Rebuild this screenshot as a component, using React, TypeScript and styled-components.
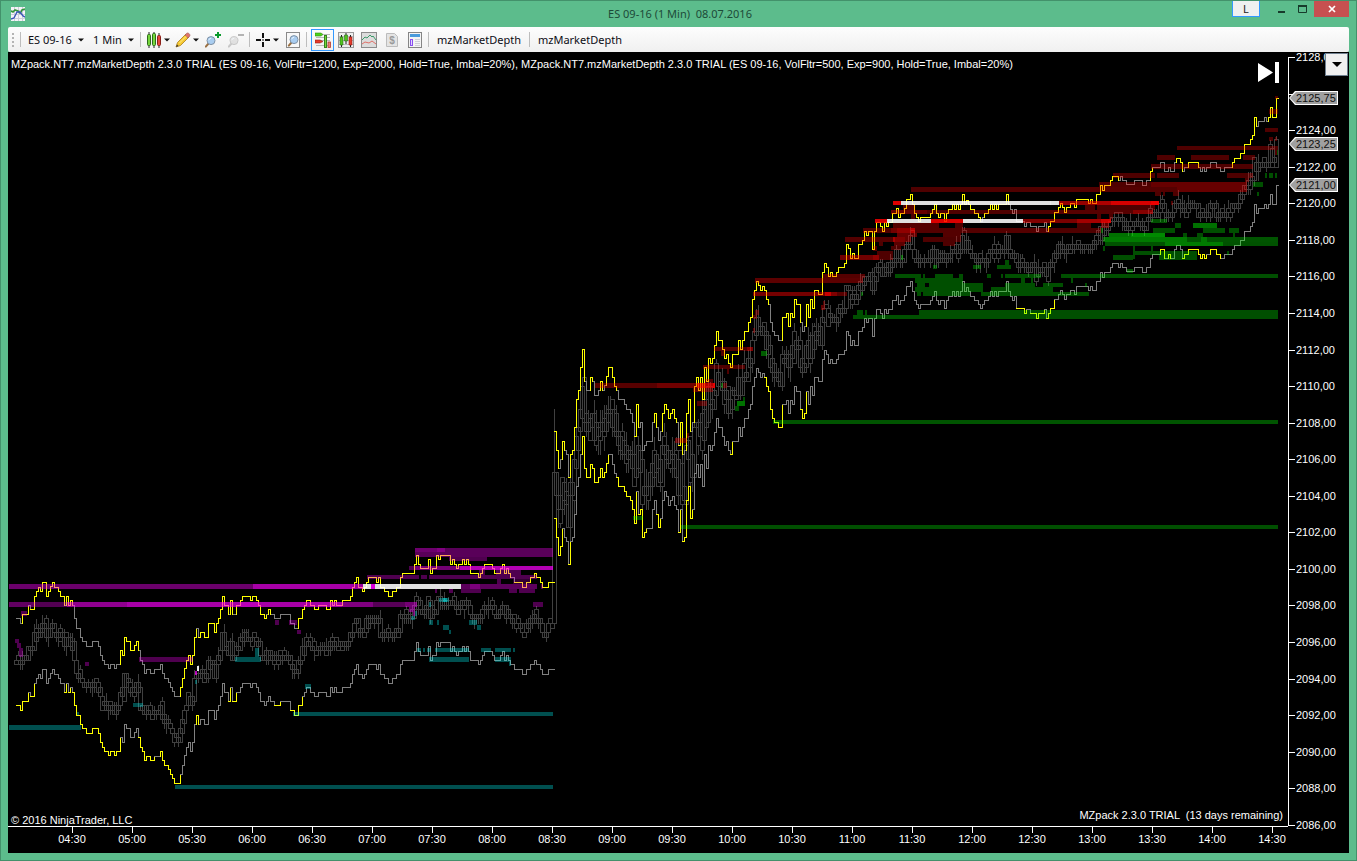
import React from "react";
import styled, { createGlobalStyle, css } from "styled-components";

const Global = createGlobalStyle`
  *, *::before, *::after { box-sizing: border-box; }
  body { margin: 0; background: #5cbc8c; }
  button, select { font: inherit; color: inherit; border: 0; padding: 0; margin: 0; background: transparent; }
  ul, ol, p, h1 { margin: 0; padding: 0; list-style: none; font: inherit; }
`;

/* ---------- price data ---------- */

type Frame = { x: number; y: number };
const F: Record<string, Frame> = {
  A: { x: 0, y: 530 },
  B: { x: 290, y: 530 },
  C: { x: 530, y: 330 },
  D: { x: 680, y: 260 },
  E: { x: 840, y: 170 },
  F: { x: 1050, y: 90 },
};

// The steps of the upper channel line, in thirds of a pixel from each frame's corner.
const upperSteps: [string, string][] = [
  ["A", "50,265 62,280 68,253 86,227 92,238 104,198 110,183 116,172 122,184 127,157 139,199 146,184 152,170 158,157 164,172 176,184 182,198 194,227 200,199 206,227 212,211 217,227 224,265 230,295 242,322 248,334 260,348 278,334 296,348 302,376 308,390 314,403 326,416 332,403 344,416 350,403 362,362 368,376 374,322 380,334 392,362 404,346 410,334 416,362 422,390 428,403 434,430 440,418 452,430 464,418 482,403 488,430 494,445 506,457 512,472 518,484 524,499 542,472 548,445 554,416 560,390 566,376 572,403 578,376 584,322 590,295 596,322 602,308 614,322 626,280 644,308 650,280 656,265 662,238 668,198 674,227 686,253 692,211 698,253 710,227 722,211 728,199 752,211 758,199 770,211 776,227 782,253 794,265 800,253 806,238 812,253 824,265 842,253"],
  ["B", "2,280 14,295 26,265 38,238 44,227 50,211 62,227 74,238 86,227 110,238 122,211 128,227 134,211 140,227 158,211 182,198 188,172 194,157 200,143 206,172 218,184 224,172 230,157 236,143 260,157 266,143 272,172 284,184 296,199 308,184 320,172 332,143 338,130 374,103 380,76 386,103 392,116 416,88 422,130 428,116 440,76 446,88 452,76 482,103 488,88 494,103 500,116 506,103 518,88 524,103 530,88 536,103 542,130 566,143 572,130 578,116 584,103 608,116 614,130 632,116 638,103 644,130 650,116 656,130 662,143 674,157 698,172 710,157 722,143 734,130 740,143 752,157 758,172 776,157 794,157"],
  ["C", "74,303 80,360 86,415 92,387 98,334 104,360 110,372 116,442 122,373 128,360 134,292 140,208 146,181 152,112 158,58 164,154 170,181 182,142 188,154 194,195 206,181 212,154 218,181 224,167 230,139 236,112 248,142 254,169 260,181 266,208 284,222 290,238 302,250 308,277 314,318 320,222 326,292 332,277 338,360 344,346 350,334 368,277 374,250 380,292 386,331 392,304 398,250 404,223 410,238 416,264 422,250 428,238 434,264 440,277 446,345 452,277 458,372 464,360 470,250 476,208 482,304 488,277 494,169 500,142 506,181 512,142 518,208 524,112 530,153 536,85 542,100 548,85 554,46 560,5 566,31 578,58 584,85 590,73 596,100 602,112 608,73 626,31 632,58 638,31"],
  ["D", "194,214 206,187 212,172 218,118 224,91 230,64 236,75 242,91 248,78 254,91 260,118 266,132 272,187 278,214 284,227 296,241 308,172 320,160 326,199 332,160 338,172 344,118 350,132 362,186 368,214 374,199 380,132 386,172 392,118 398,145 404,91 416,103 428,37 434,10 440,22 446,48 452,37 458,48 470,37 476,22"],
  ["E", "14,280 20,223 26,236 32,264 38,250 44,264 56,223 68,211 74,184 80,196 86,184 98,238 104,184 110,157 122,170 128,184 134,157 140,170 146,157 158,130 170,116 176,142 182,130 194,116 200,88 212,73 218,103 224,130 230,142 236,154 242,142 272,130 278,118 284,102 290,130 296,142 302,130 314,154 320,130 326,118 338,102 344,118 350,102 356,118 362,103 368,73 374,103 380,90 386,103 392,118 404,130 416,142 422,154 428,142 434,130 446,118 452,103 458,118 464,103 470,118 476,103 500,73 506,103 512,118 518,130 524,118 530,154 554,170 560,157 572,170 590,184 596,170 614,157 620,184 626,170"],
  ["F", "2,394 14,366 26,352 32,340 38,352 44,366 50,352 62,340 74,352 80,328 116,340 122,328 128,340 140,313 152,286 158,300 164,286 182,272 188,259 206,271 212,259 218,271 230,283 254,271 278,286 290,271 302,244 308,232 332,218 344,244 356,232 362,244 374,218 380,205 392,218 398,244 404,232 416,218 446,232 452,244 458,232 464,244 470,232 482,218 500,232 512,244 524,232 548,218 554,205 572,190 584,163 602,148 608,136 614,82 620,108 626,94 644,82 650,94 656,82 662,52 668,82 680,25 686,25"],
];

// Spans where a channel line is highlighted.
const upperHot: [string, string][] = [
  ["A", "68-86 92-194 200-217 362-416 542-590 596-686 692-698 710-800 806-812"],
  ["B", "26-662 674-794"],
  ["C", "74-86 98-104 116-164 182-188 212-218 230-260 314-326 374-380 398-440 446-458 470-482 494-650"],
  ["D", "190-266 308-362 380-500"],
  ["E", "0-422 434-506 626-640"],
  ["F", "0-206 302-308 380-398 416-428 548-620 656-686"],
];
const lowerHot: [string, string][] = [
  ["A", "50-86 92-104 194-200 206-212 217-362 416-464 470-542 590-596 686-692 698-710 820-842 872-900"],
  ["B", "2-26"],
  ["C", "74-98 116-122 158-236 260-320 326-350 380-392 446-452 458-488"],
  ["D", "150-156 172-176 254-308 362-380"],
  ["E", "530-560 572-600 620-630"],
  ["F", "2-14 240-250 332-344 350-362 398-410 416-428 446-470 482-488 500-512"],
];

const px = (v: number, o: number) => Math.round(o + v / 3 - 0.4);

const upper = upperSteps.flatMap(([f, s]) =>
  s.split(" ").map((p) => {
    const [x, y] = p.split(",").map(Number);
    return { x: px(x, F[f].x), y: px(y, F[f].y) };
  })
);

const spans = (list: [string, string][]) =>
  list.flatMap(([f, s]) => s.split(" ").map((r) => r.split("-").map((v) => px(Number(v), F[f].x))));

function linePaths(dy: number, hot: number[][]) {
  let cold = "";
  let warm = "";
  const isHot = (x: number) => hot.some(([a, b]) => x >= a && x < b);
  upper.forEach((p, i) => {
    const n = upper[i + 1];
    // Two points at one x mark the break between the night and day sessions.
    if (!n || n.x === p.x) return;
    const h = isHot(p.x + 0.5);
    const hn = isHot(n.x + 0.5);
    const y = p.y + dy + 0.5;
    const across = `M${p.x} ${y}H${n.x + 1}`;
    const down = `M${n.x + 0.5} ${y}V${n.y + dy + 0.5}`;
    if (h) warm += across;
    else cold += across;
    if (h || (hn && n.y < p.y)) warm += down;
    else cold += down;
  });
  return { cold, warm };
}

const TICK = 4.565;
const row = (y: number) => Math.round((y - 57) / TICK);
const rowY = (k: number) => Math.round(57 + k * TICK) + 0.5;

function bars() {
  let seed = 11;
  const rnd = () => {
    seed = (seed * 16807) % 2147483647;
    return seed / 2147483647;
  };
  let d = "M552.5 623.5V472.5H556.5V623.5M554.5 472V409M552 623.5H557";
  let i = 0;
  let prev = row(upper[0].y + 43);
  for (let x = 16; x <= 1276; x += 2) {
    while (i < upper.length - 1 && upper[i + 1].x <= x) i++;
    const mid = row(upper[i].y + 43);
    if (x > 552 && x < 556) {
      prev = mid;
      continue;
    }
    const wild = x > 555 && x < 720 ? 2 : x >= 720 && x < 830 ? 1 : 0;
    const top = Math.min(mid, prev) - Math.floor(rnd() * (1.4 + wild));
    let bottom = Math.max(mid, prev) + Math.floor(rnd() * (1.4 + wild));
    if (bottom === top) bottom = top + 1;
    d += `M${x - 1.5} ${rowY(top)}H${x + 2.5}V${rowY(bottom)}H${x - 1.5}Z`;
    const up = Math.floor(rnd() * (2.3 + wild));
    const dn = Math.floor(rnd() * (2.2 + wild));
    if (up) d += `M${x + 0.5} ${rowY(top)}V${rowY(top - up)}`;
    if (dn) d += `M${x + 0.5} ${rowY(bottom)}V${rowY(bottom + dn)}`;
    prev = mid;
  }
  return d;
}

// Depth levels: frame, colour, then "x1-x2,y,height,strength in %" in the frame's thirds.
const depth: [string, string, string][] = [
  ["A", "#f0f", "27-759,162,15,42 759-1060,162,15,66 27-104,216,15,38 104-200,216,15,32 200-380,216,15,56 380-1026,216,15,66 722-776,216,15,20 63-81,243,15,31 45-57,328,12,31 51-63,340,14,31 57-69,354,26,31 255-267,396,12,31 417-578,381,15,31 585-591,423,12,70 825-837,270,14,31 867-890,270,14,31 891-903,300,12,31"],
  ["A", "#fff", "590-597,408,15,90"],
  ["A", "#0ff", "27-243,585,15,31 525-1659,765,12,31 399-430,519,12,31 230-238,547,10,31 584-591,450,12,31 705-782,381,15,31 765-777,354,27,31 879-897,546,12,31"],
  ["B", "#0ff", "27-789,546,12,31 45-63,462,15,31 363-375,257,12,31 375-381,243,14,31 417-423,216,14,31 447-477,204,12,31 459-471,204,12,40 417-429,270,15,31 441-447,270,15,31 459-477,285,15,31 477-483,300,12,31 537-561,270,15,31 561-573,285,15,31 381-393,354,12,31 399-405,354,12,31 411-423,354,12,31 435-537,354,12,31 573-602,354,12,31 615-663,354,12,31 669-675,354,12,31 417-537,381,15,31 615-663,381,15,31 657-663,396,12,31"],
  ["B", "#fff", "219-243,162,15,88 255-513,162,15,88"],
  ["B", "#f0f", "190-219,162,15,60 243-255,162,15,85 513-740,162,15,36 540-570,162,15,20 156-250,216,15,50 250-345,216,15,34 345-380,216,15,45 375-789,54,27,35 375-441,54,12,12 441-465,54,12,24 477-591,81,12,31 357-375,108,12,31 375-510,108,12,45 510-789,108,12,70 566-585,121,14,31 617-693,121,14,31 231-387,135,12,31 393-411,135,12,31 417-740,135,12,31 621-633,147,15,31 669-720,147,15,20 753-759,162,14,31 435-441,177,12,31 477-489,177,12,31 513-573,177,12,31 657-681,177,12,31 687-735,177,12,31 729-759,216,15,31 357-375,231,14,40 369-375,245,12,40"],
  ["C", "#f00", "194-380,159,15,34 380-500,159,15,44 500-548,159,15,72 548-555,159,15,90 524-548,147,12,31 490-548,174,12,36 501-530,213,14,31 435-471,324,14,36 471-477,310,14,31 551-650,51,12,31 650-668,51,12,50 573-585,63,14,31 519-645,105,12,31 591-597,117,14,31 579-591,159,14,31"],
  ["C", "#0f0", "310-338,558,12,31 453-2244,585,12,31 573-579,159,14,31 615-627,228,14,31 621-645,213,15,45 639-645,201,12,31"],
  ["D", "#f00", "225-550,54,15,36 428-554,42,12,33 220-434,96,12,46 434-452,96,12,78 452-470,96,12,50 470-500,96,12,34 224-236,150,15,31 220-230,165,12,31 219-226,204,14,31 422-434,135,14,36 428-434,123,12,31"],
  ["D", "#0f0", "243-261,273,15,36 279-1794,480,12,33"],
  ["E", "#fff", "183-657,93,12,88 141-273,147,12,88 369-549,147,12,88"],
  ["E", "#f00", "213-630,51,15,31 159-183,93,12,86 153-260,120,12,40 260-630,120,12,31 105-141,147,12,82 273-369,147,12,85 549-630,147,12,50 189-225,106,14,31 213-225,132,15,31 159-297,159,15,33 345-369,159,15,31 69-153,174,15,31 153-171,174,15,45 171-213,174,15,56 213-225,174,15,72 225-630,174,15,33 171-231,189,12,40 309-363,189,12,33 15-165,201,15,33 159-195,201,15,50 195-212,201,15,40 249-363,201,15,31 117-129,216,12,31 162-195,216,12,36 309-345,216,12,31 99-111,228,14,31 153-183,228,12,31 110-159,243,12,31 0-99,255,15,44 99-117,255,15,56 117-159,255,15,31"],
  ["E", "#0f0", "183-189,255,15,36 279-291,285,12,31 399-423,285,12,31 471-513,285,12,31 495-507,270,15,31 165-243,312,12,31 249-255,312,12,31 285-338,312,12,31 357-369,312,12,31 441-453,312,12,31 483-489,312,12,31 495-603,312,12,31 225-369,324,15,31 543-555,324,15,31 573-579,324,15,31 231-255,339,12,31 267-429,339,12,31 495-585,339,12,31 609-630,339,12,31 225-429,351,15,31 453-630,351,15,31 231-243,366,12,31 249-390,366,12,31 422-630,366,12,31 51-69,420,15,31 75-81,420,15,31 237-630,420,27,31 39-237,435,12,31 63-69,366,12,31"],
  ["F", "#fff", "0-3,333,12,30"],
  ["F", "#f00", "381-683,168,12,31 675-684,18,10,31 657-684,57,15,31 645-684,114,12,31 657-669,141,12,31 675-681,141,12,31 675-681,181,14,31 321-375,195,15,31 423-537,195,15,31 579-615,195,15,31 303-608,222,15,31 189-315,249,15,31 321-387,249,15,31 531-608,249,15,31 147-303,276,15,31 303-590,276,15,40 584-596,264,12,31 0-381,291,15,33 381-590,291,15,40 315-333,306,12,31 339-345,306,12,31 369-387,306,12,31 27-141,333,12,58 141-183,333,12,68 183-303,333,12,84 303-327,333,12,94 363-369,333,12,31 105-135,345,15,31 141-315,345,15,31 0-250,360,12,34 250-309,360,12,52 0-80,387,12,48 80-153,387,12,64 153-183,387,12,82 141-153,372,15,31 177-189,372,15,31 153-177,399,15,36 81-123,399,15,31 0-153,414,15,31"],
  ["F", "#0f0", "645-651,249,14,31 657-669,249,14,31 675-681,249,14,31 609-639,276,14,31 621-627,306,12,31 681-684,181,14,31 303-351,387,12,31 375-393,399,15,31 429-501,399,15,44 309-375,414,15,31 459-525,414,15,31 537-567,414,15,31 153-159,414,15,31 177-243,429,12,44 243-345,429,12,54 399-411,429,12,31 441-459,429,12,31 549-555,429,12,31 159-684,441,15,33 165-411,441,15,22 453-471,441,15,22 165-684,456,12,32 345-519,456,12,24 159-165,468,15,31 249-255,468,39,31 303-309,468,15,31 255-327,483,12,31 189-249,495,15,31 327-440,483,27,31 531-537,483,12,31 231-249,537,12,31 33-684,552,12,31 63-69,564,15,31 0-39,579,12,31 0-9,591,15,31 105-111,579,12,31 0-117,606,12,31 0-684,660,27,31"],
];

const levels = depth.flatMap(([f, fill, s]) =>
  s.split(" ").map((r) => {
    const [xs, y, h, a] = r.split(",");
    const [x1, x2] = xs.split("-").map((v) => Math.round(F[f].x + Number(v) / 3));
    const top = Math.round(F[f].y + Number(y) / 3);
    return { fill, x: x1, w: x2 - x1, y: top, h: Math.round(Number(h) / 3), a: Number(a) / 100 };
  })
);

const upperPath = linePaths(0, spans(upperHot));
const lowerPath = linePaths(87, spans(lowerHot));
const barPath = bars();

// 2126 keeps its tick but has no label: the last price mark stands there.
const prices = Array.from({ length: 22 }, (_, i) => ({
  value: 2128 - i * 2,
  text: i === 1 ? "" : `${2128 - i * 2},00`,
}));
const times = Array.from({ length: 21 }, (_, i) => {
  const m = 270 + i * 30;
  return `${String(Math.floor(m / 60)).padStart(2, "0")}:${m % 60 ? "30" : "00"}`;
});
const marks = [
  { text: "2125,75", top: 39 },
  { text: "2123,25", top: 85 },
  { text: "2121,00", top: 126 },
];

/* ---------- window ---------- */

const Window = styled.div`
  min-height: 100vh;
  display: flex;
  flex-direction: column;
  padding: 0 7px 7px;
  background: #5cbc8c;
  border: 1px solid #43916b;
  font-family: "Noto Sans", "Open Sans", sans-serif;
  font-size: 11px;
`;
const TitleBar = styled.header`
  height: 26px;
  flex: none;
  display: grid;
  grid-template-columns: 1fr auto 1fr;
  align-items: center;
  padding-left: 3px;
  color: #1c4a38;
`;
const Title = styled.h1`
  line-height: 16px;
  white-space: pre;
`;
const Controls = styled.div`
  display: flex;
  align-self: start;
  justify-content: flex-end;
`;
const CaptionButton = styled.button<{ $kind?: "link" | "close" }>`
  height: 16px;
  width: 22px;
  display: flex;
  align-items: center;
  justify-content: center;
  color: #173a2b;
  ${(p) => p.$kind === "link" && css`
    width: 28px;
    margin-right: 10px;
    background: #f0f0f0;
    border: 1px solid #3399ff;
    border-top: 0;
    color: #222;
  `}
  ${(p) => p.$kind === "close" && css`
    width: 35px;
    background: #c75050;
    color: #fff;
  `}
`;
const Toolbar = styled.div`
  height: 25px;
  flex: none;
  display: flex;
  align-items: center;
  background: linear-gradient(#fdfdfd, #f0f0f0);
  border-radius: 2px;
  color: #0c0c14;
`;
const Grip = styled.span`
  width: 10px;
  height: 15px;
  background: radial-gradient(circle, #b4b4b4 1px, transparent 1px) 3px 0 / 4px 4px repeat-y;
`;
const Sep = styled.span`
  width: 5px;
  height: 15px;
  border-left: 2px solid transparent;
  background: linear-gradient(#bdbdbd, #bdbdbd) 0 0 / 1px 100% no-repeat;
`;
const Picker = styled.label<{ $w: number }>`
  width: ${(p) => p.$w}px;
  display: flex;
  align-items: center;
  padding-right: 4px;
  svg { flex: none; }
`;
const Select = styled.select`
  appearance: none;
  flex: 1;
  min-width: 0;
  padding-left: 5px;
  line-height: 18px;
  outline: none;
`;
const Tool = styled.button<{ $menu?: boolean; $on?: boolean }>`
  width: ${(p) => (p.$menu ? 29 : 23)}px;
  height: 22px;
  display: flex;
  align-items: center;
  justify-content: center;
  gap: 2px;
  ${(p) => p.$on && css`border: 1px solid #3399ff;`}
  svg { flex: none; }
`;
const TopTools = styled.div`
  display: flex;
  align-items: center;
  padding-left: 2px;
`;
const TextTool = styled.button`
  padding: 0 6px;
  line-height: 18px;
`;

/* ---------- chart ---------- */

const Chart = styled.main`
  flex: 1;
  display: grid;
  grid-template-columns: 1fr 61px;
  grid-template-rows: 1fr 26px;
  background: #000;
  color: #fff;
  font-family: "Liberation Sans", Arial, sans-serif;
  font-size: 11px;
  line-height: 13px;
  min-height: 600px;
`;
const Plot = styled.section`
  position: relative;
  display: flex;
  flex-direction: column;
  justify-content: space-between;
  min-width: 0;
  border-bottom: 1px solid #fff;
  padding: 6px 5px 0 3px;
`;
const Canvas = styled.svg`
  position: absolute;
  inset: 0;
  width: 100%;
  height: 100%;
`;
const Caption = styled.p`
  position: relative;
  white-space: pre;
`;
const Footer = styled.footer`
  position: relative;
  display: flex;
  justify-content: space-between;
  line-height: 12px;
`;
const Trial = styled.p`
  padding-bottom: 5px;
  white-space: pre;
`;
const Copyright = styled.p`
  align-self: flex-end;
`;
const JumpButton = styled.button`
  position: absolute;
  right: 8px;
  top: 10px;
  width: 22px;
  height: 21px;
`;
const PriceAxis = styled.aside`
  position: relative;
  padding: 5px 0 1px;
`;
const PriceList = styled.ol`
  height: 100%;
  display: flex;
  flex-direction: column;
  justify-content: space-between;
  border-left: 1px solid #fff;
`;
const Price = styled.li`
  height: 1px;
  display: flex;
  align-items: center;
  &::before { content: ""; width: 6px; height: 1px; margin-right: 1px; background: #fff; }
`;
const Mark = styled.output<{ $top: number }>`
  position: absolute;
  left: 1px;
  top: ${(p) => p.$top}px;
  width: 49px;
  height: 14px;
  padding-left: 7px;
  line-height: 14px;
  background: #fff;
  color: #111;
  clip-path: polygon(0 50%, 6px 0, 100% 0, 100% 100%, 6px 100%);
  z-index: 0;
  &::before {
    content: "";
    position: absolute;
    inset: 1px;
    background: #a0a0a0;
    clip-path: polygon(0 50%, 6px 0, 100% 0, 100% 100%, 6px 100%);
    z-index: -1;
  }
`;
const ScaleButton = styled.button`
  position: absolute;
  right: 1px;
  top: 1px;
  width: 23px;
  height: 23px;
  display: flex;
  align-items: center;
  justify-content: center;
  background: #f0f0f0;
  border: 1px solid #708090;
`;
const TimeAxis = styled.ol`
  grid-column: 1 / 3;
  display: flex;
  padding: 0 47px 0 34px;
`;
const Time = styled.li`
  flex: 1;
  min-width: 0;
  display: flex;
  flex-direction: column;
  align-items: center;
  &::before { content: ""; width: 1px; height: 6px; background: #fff; }
`;

const Caret = () => (
  <svg width="6" height="4" viewBox="0 0 6 4" aria-hidden="true"><path d="M0 .5h6L3 3.5z" fill="#111" /></svg>
);

const Lens = ({ x, y, faded }: { x: number; y: number; faded?: boolean }) => (
  <g transform={`translate(${x} ${y})`} opacity={faded ? 0.35 : 1}>
    <path d="M3.5 7.5L.8 10.6" stroke={faded ? "#777" : "#9a7042"} strokeWidth="2" strokeLinecap="round" />
    <circle cx="6" cy="4.6" r="4" fill={faded ? "#bbb" : "#a9cdf0"} stroke={faded ? "#777" : "#7f92a6"} />
    <path d="M3.8 4.2a2.4 2.4 0 0 1 2.4-2" stroke="#e8f4ff" fill="none" />
  </g>
);

const Icon = ({ children }: { children: React.ReactNode }) => (
  <svg width="16" height="16" viewBox="0 0 16 16" aria-hidden="true">{children}</svg>
);

export default function App() {
  return (
    <Window>
      <Global />
      <TitleBar>
        <svg width="14" height="14" viewBox="0 0 14 14" aria-hidden="true">
          <path d="M0 0h14v14H0z" fill="#f4f4f8" />
          <path d="M0 3.5h14M0 7.5h14M0 11.5h14M3.5 0v14M7.5 0v14M11.5 0v14" stroke="#cdcdda" />
          <path d="M0 4l2 1 2-2 3 1 2 2 1-1 1-2 3-1" stroke="#35963a" strokeWidth="1.6" fill="none" />
          <path d="M0 12l3-1 2-4 1-2 3 0 3 4 2 1" stroke="#3a55b8" strokeWidth="1.4" fill="none" />
        </svg>
        <Title>ES 09-16 (1 Min)  08.07.2016</Title>
        <Controls>
          <CaptionButton $kind="link">L</CaptionButton>
          <CaptionButton aria-label="Minimize">
            <svg width="10" height="9" viewBox="0 0 10 9"><path d="M2 7h7" stroke="currentColor" strokeWidth="2" /></svg>
          </CaptionButton>
          <CaptionButton aria-label="Maximize">
            <svg width="10" height="8" viewBox="0 0 10 8"><path d="M.5 1v6.5h8V1" fill="none" stroke="currentColor" /><path d="M0 1h9" stroke="currentColor" strokeWidth="2" /></svg>
          </CaptionButton>
          <CaptionButton $kind="close" aria-label="Close">
            <svg width="8" height="8" viewBox="0 0 8 8"><path d="M1 1l6 6M7 1L1 7" stroke="currentColor" strokeWidth="1.7" /></svg>
          </CaptionButton>
        </Controls>
      </TitleBar>

      <Toolbar role="toolbar">
        <Grip />
        <Sep />
        <Picker $w={65}>
          <Select aria-label="Instrument"><option>ES 09-16</option></Select>
          <Caret />
        </Picker>
        <Picker $w={50}>
          <Select aria-label="Interval"><option>1 Min</option></Select>
          <Caret />
        </Picker>
        <Sep />
        <Tool $menu aria-label="Chart style">
          <Icon>
            <path d="M3 0v16M8 0v16M13 1v15" stroke="#222" />
            <rect x="1.5" y="2.5" width="3" height="11" rx="1" fill="#76d63c" stroke="#2e6d1c" />
            <rect x="6.5" y="1.5" width="3" height="12" rx="1" fill="#76d63c" stroke="#2e6d1c" />
            <rect x="11.5" y="3.5" width="3" height="10" rx="1" fill="#e6463c" stroke="#8a2019" />
          </Icon>
          <Caret />
        </Tool>
        <Tool $menu aria-label="Drawing tools">
          <Icon>
            <path d="M1 15l1.5-4.5L11 2l3 3-8.500 8.500z" fill="#f6c931" stroke="#a87a1c" strokeWidth=".8" />
            <path d="M10 3l1.800-1.800q1-.7 2 .2l.8.8q.8 1 0 2L13 6z" fill="#e0736c" stroke="#9c5a50" strokeWidth=".6" />
            <path d="M1 15l1-2.500 1.500 1.500z" fill="#333" />
            <path d="M4.500 11L11 4.500" stroke="#ffeb8c" />
          </Icon>
          <Caret />
        </Tool>
        <Tool aria-label="Zoom in">
          <Icon><Lens x={0} y={4} /><path d="M13 0v6M10 3h6" stroke="#0a9a2c" strokeWidth="2" /></Icon>
        </Tool>
        <Tool aria-label="Zoom out">
          <Icon><Lens x={0} y={4} faded /><path d="M10 3h6" stroke="#b4b4b4" strokeWidth="2" /></Icon>
        </Tool>
        <Sep />
        <Tool $menu aria-label="Crosshair">
          <Icon><path d="M8 1v5M8 10v5M1 8h5M10 8h5M7.500 8h1" stroke="#111" strokeWidth="2" /></Icon>
          <Caret />
        </Tool>
        <Tool aria-label="Data box">
          <Icon>
            <rect x="1.500" y=".5" width="13" height="15" fill="#f8f8f8" stroke="#8a8a8a" />
            <Lens x={3} y={3} />
          </Icon>
        </Tool>
        <Sep />
        <TopTools>
          <Tool $on aria-label="Chart trader">
            <Icon>
              <path d="M1 5.500h14M1 8.500h14M1 13.500h14M8 2.500h7" stroke="#b8b8b8" />
              <path d="M0 1h6l2 1.500L6 4H0z" fill="#4fd11c" stroke="#2b8d14" strokeWidth=".6" />
              <path d="M0 8h5l3 1.500L5 11H0z" fill="#e63a2c" stroke="#952018" strokeWidth=".6" />
              <rect x="9.500" y="3.500" width="2" height="12" fill="#76d63c" stroke="#34841c" />
              <rect x="13" y="10" width="2.500" height="5.500" fill="#e88078" stroke="#b23a30" strokeWidth=".8" />
            </Icon>
          </Tool>
          <Tool aria-label="Indicators">
            <Icon>
              <rect x=".5" y=".5" width="15" height="15" fill="#eee" stroke="#999" />
              <path d="M1 4.500h14M1 8.500h14M1 12.500h14" stroke="#bbb" />
              <path d="M3.500 3v12M8 1v11M12.500 3v12" stroke="#222" />
              <path d="M2 5h3v8H2zM6.500 3h3v6h-3z" fill="#52c41e" stroke="#2e6d1c" strokeWidth=".6" />
              <path d="M11 5h3v8h-3z" fill="#e63a2c" stroke="#8a2019" strokeWidth=".6" />
            </Icon>
          </Tool>
          <Tool aria-label="Strategies">
            <Icon>
              <rect x=".5" y=".5" width="15" height="15" fill="#dcdcdc" stroke="#8c8c8c" />
              <path d="M1 8l3-3 2 1 3-3 2 2 1-1 3 4" stroke="#3c9a6a" fill="none" />
              <path d="M1 12l3-2 4 1 3-2 4 3" stroke="#e07068" fill="none" />
            </Icon>
          </Tool>
          <Tool aria-label="Account" disabled>
            <Icon>
              <path d="M2.500 1.500h8l3 3v10h-11z" fill="#e4e4e4" stroke="#bcbcbc" />
              <text x="8" y="12" textAnchor="middle" fontSize="10" fontWeight="700" fontFamily="Liberation Sans" fill="#999">$</text>
            </Icon>
          </Tool>
          <Tool aria-label="Properties">
            <Icon>
              <rect x="1.500" y=".5" width="13" height="15" fill="#f4f4f4" stroke="#858585" />
              <path d="M3 2h10v3H3z" fill="#4a9bdc" />
              <rect x="3.500" y="7.500" width="2" height="6" fill="#e0d4ff" stroke="#8a50f0" />
              <path d="M8 7.500h5M8 9.500h5M8 11.500h5M8 13.500h5" stroke="#cfcfd8" />
            </Icon>
          </Tool>
        </TopTools>
        <Sep />
        <TextTool>mzMarketDepth</TextTool>
        <Sep />
        <TextTool>mzMarketDepth</TextTool>
      </Toolbar>

      <Chart>
        <Plot>
          <Canvas viewBox="8 52 1280 774" preserveAspectRatio="none" role="img" aria-label="ES 09-16 one minute chart with market depth">
            <g shapeRendering="crispEdges" fill="none" strokeWidth="1">
              <path d={barPath} stroke="#404040" />
              <path d={upperPath.cold} stroke="#808080" />
              <path d={lowerPath.cold} stroke="#808080" />
              <path d={upperPath.warm} stroke="#ff0" />
              <path d={lowerPath.warm} stroke="#ff0" />
              {levels.map((l, i) => (
                <rect key={i} x={l.x} y={l.y} width={l.w} height={l.h} fill={l.fill} fillOpacity={l.a} />
              ))}
            </g>
          </Canvas>
          <Caption>MZpack.NT7.mzMarketDepth 2.3.0 TRIAL (ES 09-16, VolFltr=1200, Exp=2000, Hold=True, Imbal=20%), MZpack.NT7.mzMarketDepth 2.3.0 TRIAL (ES 09-16, VolFltr=500, Exp=900, Hold=True, Imbal=20%)</Caption>
          <JumpButton aria-label="Go to last bar">
            <svg width="22" height="21" viewBox="0 0 22 21" aria-hidden="true"><path d="M0 1l15 9.500L0 20zM17 0h4v21h-4z" fill="#fff" /></svg>
          </JumpButton>
          <Footer>
            <Copyright>© 2016 NinjaTrader, LLC</Copyright>
            <Trial>MZpack 2.3.0 TRIAL  (13 days remaining)</Trial>
          </Footer>
        </Plot>
        <PriceAxis>
          <PriceList>
            {prices.map((p) => <Price key={p.value}>{p.text}</Price>)}
          </PriceList>
          {marks.map((m) => <Mark key={m.text} $top={m.top}>{m.text}</Mark>)}
          <ScaleButton aria-label="Scale options">
            <svg width="10" height="6" viewBox="0 0 10 6" aria-hidden="true"><path d="M0 0h10L5 5z" fill="#000" /></svg>
          </ScaleButton>
        </PriceAxis>
        <TimeAxis>
          {times.map((t) => <Time key={t}>{t}</Time>)}
        </TimeAxis>
      </Chart>
    </Window>
  );
}
